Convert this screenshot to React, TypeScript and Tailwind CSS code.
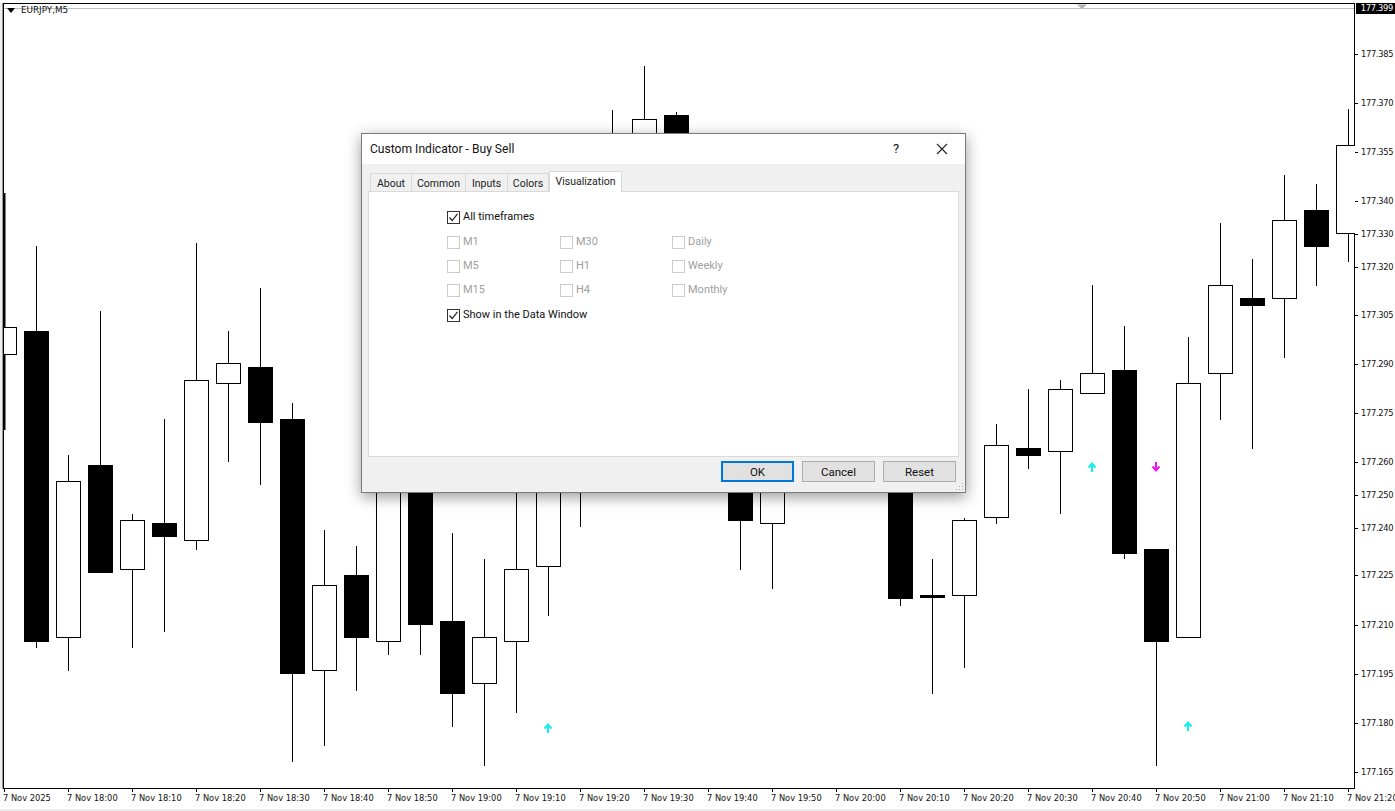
const font = "font-['Roboto',sans-serif]";

// x, high, low, body top, body bottom, black?
const candles: [number, number, number, number, number, boolean][] = [
  [36, 246, 648, 331, 642, true],
  [68, 455, 671, 481, 638, false],
  [100, 311, 573, 465, 573, true],
  [132, 514, 648, 520, 570, false],
  [164, 419, 632, 523, 537, true],
  [196, 243, 550, 380, 541, false],
  [228, 331, 462, 363, 384, false],
  [260, 288, 485, 367, 423, true],
  [292, 403, 762, 419, 674, true],
  [324, 530, 746, 585, 671, false],
  [356, 546, 691, 575, 638, true],
  [388, 400, 655, 420, 642, false],
  [420, 400, 655, 420, 625, true],
  [452, 533, 727, 621, 694, true],
  [484, 559, 766, 637, 684, false],
  [516, 470, 713, 569, 642, false],
  [548, 400, 616, 450, 567, false],
  [580, 400, 527, 410, 470, false],
  [612, 110, 300, 133, 250, false],
  [644, 66, 300, 119, 250, false],
  [676, 112, 300, 115, 250, true],
  [740, 400, 570, 440, 521, true],
  [772, 400, 589, 440, 524, false],
  [900, 400, 606, 440, 599, true],
  [932, 559, 694, 595, 598, true],
  [964, 518, 668, 520, 596, false],
  [996, 424, 524, 445, 518, false],
  [1028, 389, 469, 448, 456, true],
  [1060, 380, 514, 389, 452, false],
  [1092, 285, 394, 373, 394, false],
  [1124, 326, 559, 370, 554, true],
  [1156, 549, 766, 549, 642, true],
  [1188, 337, 638, 383, 638, false],
  [1220, 223, 420, 285, 374, false],
  [1252, 259, 449, 298, 306, true],
  [1284, 175, 358, 220, 299, false],
  [1316, 184, 286, 210, 247, true],
  [1348, 109, 262, 145, 234, false],
];

const prices: [string, number][] = [
  ["177.385", 54], ["177.370", 103], ["177.355", 152], ["177.340", 201], ["177.330", 234],
  ["177.320", 267], ["177.305", 315], ["177.290", 364], ["177.275", 413], ["177.260", 462],
  ["177.250", 495], ["177.240", 528], ["177.225", 575], ["177.210", 625], ["177.195", 674],
  ["177.180", 723], ["177.165", 772],
];

const times = [
  "7 Nov 2025", "7 Nov 18:00", "7 Nov 18:10", "7 Nov 18:20", "7 Nov 18:30", "7 Nov 18:40", "7 Nov 18:50",
  "7 Nov 19:00", "7 Nov 19:10", "7 Nov 19:20", "7 Nov 19:30", "7 Nov 19:40", "7 Nov 19:50", "7 Nov 20:00",
  "7 Nov 20:10", "7 Nov 20:20", "7 Nov 20:30", "7 Nov 20:40", "7 Nov 20:50", "7 Nov 21:00", "7 Nov 21:10", "7 Nov 21:20",
];

const tabs = ["About", "Common", "Inputs", "Colors"];

const tabWidths: Record<string, string> = {
  About: "w-[42px]",
  Common: "w-[55px]",
  Inputs: "w-[43px]",
  Colors: "w-[42px]",
};

function Arrow({ x, y, color, down = false }: { x: number; y: number; color: string; down?: boolean }) {
  return (
    <g transform={`translate(${x} ${y})${down ? " rotate(180)" : ""}`} stroke={color} fill="none" strokeWidth="2">
      <path d="M0 5V-3.5M-3.5 0.5L0 -3.5L3.5 0.5" />
    </g>
  );
}

function Chart() {
  return (
    <svg viewBox="3 3 1352 786" className="block w-[1352px] h-[786px]">
      <rect x="3.5" y="3.5" width="1351" height="785" fill="#fff" stroke="#000" />
      <line x1="4" y1="8.5" x2="1354" y2="8.5" stroke="#c0c0c0" />
      <path d="M1077 4.5h10l-5 4.5z" fill="#b0b0b0" />
      <line x1="4.5" y1="193" x2="4.5" y2="430" stroke="#000" strokeWidth="2" />
      <rect x="3.5" y="327.5" width="13" height="27" fill="#fff" stroke="#000" />
      {candles.map(([x, high, low, top, bottom, black]) => (
        <g key={x}>
          <line x1={x + 0.5} y1={high} x2={x + 0.5} y2={low} stroke="#000" />
          <rect
            x={x - 11.5}
            y={top + 0.5}
            width={24}
            height={bottom - top - 1}
            fill={black ? "#000" : "#fff"}
            stroke="#000"
          />
        </g>
      ))}
      <Arrow x={548} y={728} color="#14eeee" />
      <Arrow x={1092} y={467} color="#14eeee" />
      <Arrow x={1188} y={726} color="#14eeee" />
      <Arrow x={1156} y={467} color="#f014f0" down />
    </svg>
  );
}

function CheckBox({ label, checked = false }: { label: string; checked?: boolean }) {
  return (
    <div className={`flex items-center gap-[3px] h-[14px] ${checked ? "text-[#111]" : "text-[#a0a0a0]"}`}>
      <span
        className={`w-[13px] h-[13px] border flex items-center justify-center bg-white ${checked ? "border-[#333]" : "border-[#ccc]"}`}
      >
        {checked && (
          <svg viewBox="0 0 11 11" className="w-[11px] h-[11px]">
            <path d="M1.5 5.5L4.2 8.5L9.5 1.8" fill="none" stroke="#222" strokeWidth="1.2" />
          </svg>
        )}
      </span>
      <span>{label}</span>
    </div>
  );
}

function Dialog() {
  return (
    <div
      className={`absolute left-[361px] top-[133px] w-[605px] h-[360px] flex flex-col bg-[#f0f0f0] border border-[#7a7a7a] shadow-[0_4px_14px_rgba(0,0,0,0.4)] ${font} text-[11px] text-[#222]`}
    >
      {/* title bar */}
      <div className="h-[30px] bg-white flex items-center pl-[8px] text-[12.1px] text-[#111]">
        <span className="flex-1">Custom Indicator - Buy Sell</span>
        <span className="w-[46px] text-center text-[13px]">?</span>
        <span className="w-[46px] flex justify-center">
          <svg viewBox="0 0 12 12" className="w-[12px] h-[12px]">
            <path d="M1 1L11 11M11 1L1 11" stroke="#222" strokeWidth="1.1" />
          </svg>
        </span>
      </div>

      {/* tabs */}
      <div className="flex items-end h-[27px] pl-[8px] relative z-10 text-[10.5px]">
        {tabs.map((t) => (
          <div
            key={t}
            className={`${tabWidths[t]} h-[18px] pt-[2px] flex items-center justify-center bg-[#f0f0f0] border border-b-0 border-[#d9d9d9] -mr-px`}
          >
            {t}
          </div>
        ))}
        <div className="ml-[1px] w-[73px] h-[21px] flex items-center justify-center bg-white border border-b-0 border-[#d9d9d9] -mb-px pb-[1px]">
          Visualization
        </div>
      </div>

      {/* page */}
      <div className="mx-[6px] h-[266px] bg-white border border-[#d9d9d9] pl-[78px] pt-[18px]">
        <CheckBox label="All timeframes" checked />
        <div className="grid grid-cols-[113px_112px_100px] gap-y-[10px] mt-[11px] mb-[11px]">
          <CheckBox label="M1" />
          <CheckBox label="M30" />
          <CheckBox label="Daily" />
          <CheckBox label="M5" />
          <CheckBox label="H1" />
          <CheckBox label="Weekly" />
          <CheckBox label="M15" />
          <CheckBox label="H4" />
          <CheckBox label="Monthly" />
        </div>
        <CheckBox label="Show in the Data Window" checked />
      </div>

      {/* buttons */}
      <div className="flex justify-end gap-[8px] pr-[9px] pt-[4px] text-[11.5px] text-[#111]">
        <button className="w-[73px] h-[21px] pt-[2px] bg-[#e1e1e1] border-2 border-[#0078d7] flex items-center justify-center">OK</button>
        <button className="w-[73px] h-[21px] pt-[2px] bg-[#e1e1e1] border border-[#adadad] flex items-center justify-center">Cancel</button>
        <button className="w-[73px] h-[21px] pt-[2px] bg-[#e1e1e1] border border-[#adadad] flex items-center justify-center">Reset</button>
      </div>

      {/* size grip */}
      <svg viewBox="0 0 9 9" className="absolute right-[1px] bottom-[1px] w-[9px] h-[9px]">
        <path d="M7 1h1v1h-1zM4 4h1v1h-1zM7 4h1v1h-1zM1 7h1v1h-1zM4 7h1v1h-1zM7 7h1v1h-1z" fill="#a8a8a8" />
      </svg>
    </div>
  );
}

export default function App() {
  const axisText = "font-['DejaVu_Sans',sans-serif] text-[8.3px] leading-none text-[#111]";

  return (
    <div className="relative w-[1395px] h-[811px] overflow-hidden bg-white flex flex-col">
      <div className="flex pt-[3px]">
        <div className="w-[3px] bg-[#eeeeee] border-r border-[#999]" />
        <div className="relative">
          <Chart />
          <div className="absolute left-[4px] top-[3px] flex items-center gap-[6px] font-['DejaVu_Sans',sans-serif] text-[8.8px] leading-none text-[#111]">
            <svg viewBox="0 0 8 5" className="w-[8px] h-[5px]">
              <path d="M0 0h8l-4 5z" fill="#000" />
            </svg>
            <span>EURJPY,M5</span>
          </div>
        </div>

        {/* price axis */}
        <div className={`relative flex-1 tracking-[-0.3px] ${axisText}`}>
          <div className="absolute left-[1px] top-0 w-[39px] h-[11px] bg-black text-white flex items-center justify-end pr-[2px]">
            177.399
          </div>
          {prices.map(([p, y]) => (
            <div
              key={p}
              className="absolute left-0 flex items-center gap-[3px] h-[10px]"
              style={{ top: y - 8 }}
            >
              <span className="w-[3px] h-px bg-black" />
              <span>{p}</span>
            </div>
          ))}
        </div>
      </div>

      {/* time axis */}
      <div className={`flex pl-[3px] h-[20px] ${axisText} whitespace-nowrap`}>
        {times.map((t) => (
          <div key={t} className="w-[64px] shrink-0 relative pt-[5px]">
            <span className="absolute left-[1px] top-0 w-px h-[3px] bg-black" />
            {t}
          </div>
        ))}
      </div>
      <div className="flex-1 bg-[#eeeeee]" />

      <Dialog />
    </div>
  );
}
